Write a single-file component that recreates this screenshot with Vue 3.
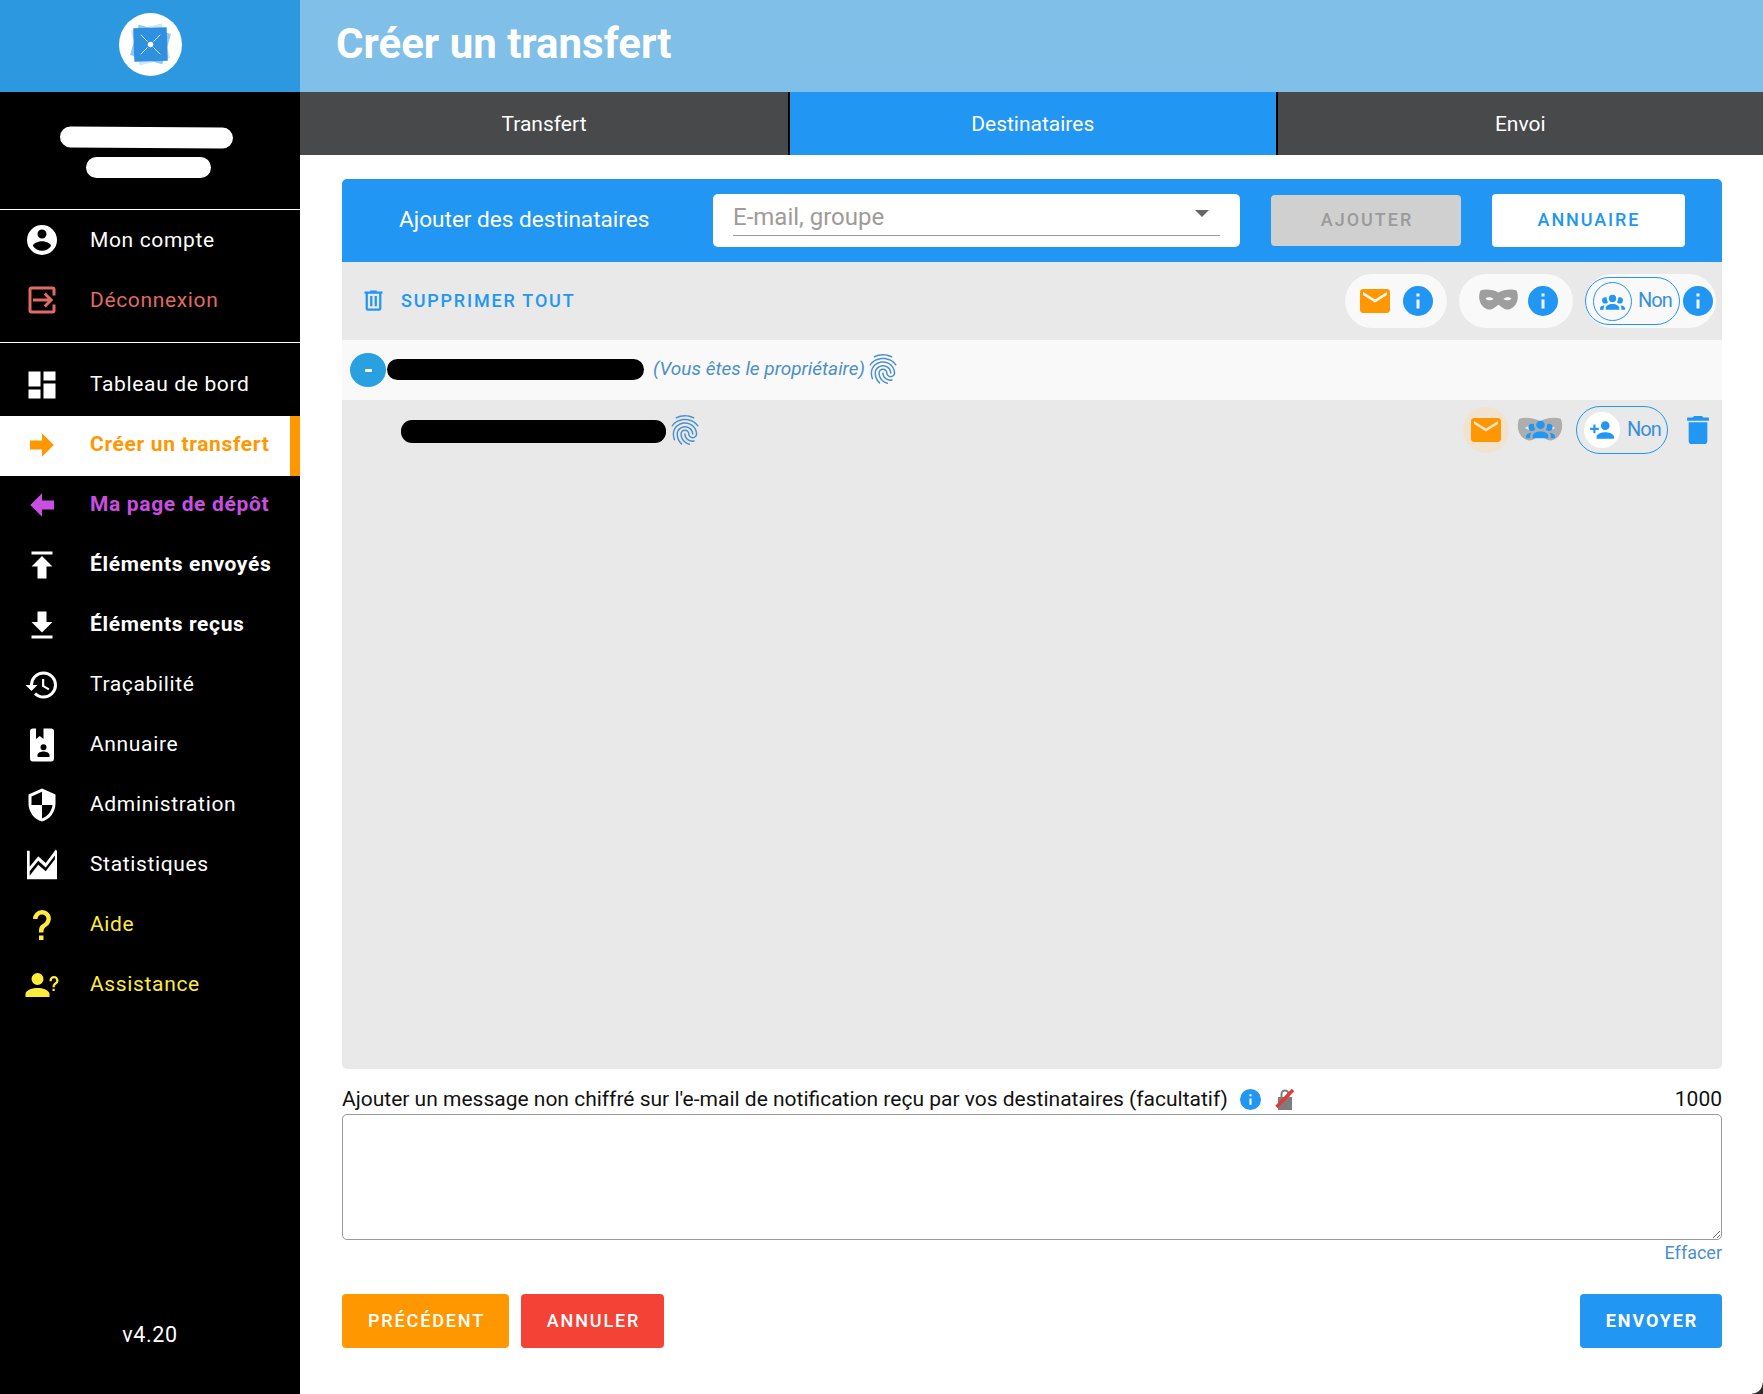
<script setup>
const icons = {
  account: 'M12,19.2C9.5,19.2 7.29,17.92 6,16C6.03,14 10,12.9 12,12.9C14,12.9 17.97,14 18,16C16.71,17.92 14.5,19.2 12,19.2M12,5A3,3 0 0,1 15,8A3,3 0 0,1 12,11A3,3 0 0,1 9,8A3,3 0 0,1 12,5M12,2A10,10 0 0,0 2,12A10,10 0 0,0 12,22A10,10 0 0,0 22,12A10,10 0 0,0 12,2Z',
  logout: 'M5,3H19A2,2 0 0,1 21,5V9H19V5H5V19H19V15H21V19A2,2 0 0,1 19,21H5A2,2 0 0,1 3,19V5A2,2 0 0,1 5,3M14.5,7L13.1,8.4L15.7,11H6V13H15.7L13.1,15.6L14.5,17L19.5,12L14.5,7Z',
  dashboard: 'M13,3V9H21V3M13,21H21V11H13M3,21H11V15H3M3,13H11V3H3V13Z',
  right: 'M4,15V9H12V4.16L19.84,12L12,19.84V15H4Z',
  left: 'M20,9V15H12V19.84L4.16,12L12,4.16V9H20Z',
  upload: 'M5,3V5H19V3H5M5,13H9V21H15V13H19L12,6L5,13Z',
  download: 'M5,21H19V19H5M19,10H15V3H9V10H5L12,17L19,10Z',
  history: 'M13.5,8H12V13L16.28,15.54L17,14.33L13.5,12.25V8M13,3A9,9 0 0,0 4,12H1L4.96,16.03L9,12H6A7,7 0 0,1 13,5A7,7 0 0,1 20,12A7,7 0 0,1 13,19C11.07,19 9.32,18.21 8.06,16.94L6.64,18.36C8.27,20 10.5,21 13,21A9,9 0 0,0 22,12A9,9 0 0,0 13,3',
  book: 'M6,1H8V8L10.5,6L13,8V1H18A2,2 0 0,1 20,3V21A2,2 0 0,1 18,23H6A2,2 0 0,1 4,21V3A2,2 0 0,1 6,1M13,11.5A2,2 0 0,0 11,13.5A2,2 0 0,0 13,15.5A2,2 0 0,0 15,13.5A2,2 0 0,0 13,11.5M9,20H17V18.6C17,17.2 14.3,16.4 13,16.4C11.7,16.4 9,17.2 9,18.6V20Z',
  shield: 'M12 1L3 5v6c0 5.55 3.84 10.74 9 12 5.16-1.26 9-6.45 9-12V5l-9-4zm0 10.99h7c-.53 4.12-3.28 7.79-7 8.94V12H5V6.3l7-3.11v8.8z',
  stats: 'M2,2.5H3.8V13.2L9.5,6.2L14.5,10.6L21.2,1.6L22,2.6V21.5H2V2.5M3.8,19.2L9.5,11.8L14.5,16.2L20.6,8.2V5.6L14.5,13.6L9.5,9.2L3.8,16.2V19.2Z',
  help: 'M10,19H13V22H10V19M12,2C17.35,2.22 19.68,7.62 16.5,11.67C15.67,12.67 14.33,13.33 13.67,14.17C13,15 13,16 13,17H10C10,15.33 10,13.92 10.67,12.92C11.33,11.92 12.67,11.33 13.5,10.67C15.92,8.43 15.32,5.26 12,5A3,3 0 0,0 9,8H6A6,6 0 0,1 12,2Z',
  support: 'M13,8A4,4 0 0,1 9,12A4,4 0 0,1 5,8A4,4 0 0,1 9,4A4,4 0 0,1 13,8M17,18V20H1V18C1,15.79 4.58,14 9,14C13.42,14 17,15.79 17,18M20.5,14.5V16H19V14.5H20.5M18.5,9.5H17V9A3,3 0 0,1 20,6A3,3 0 0,1 23,9C23,9.97 22.5,10.88 21.71,11.41L21.41,11.6C20.84,12 20.5,12.61 20.5,13.3V13.5H19V13.3C19,12.11 19.6,11 20.59,10.35L20.88,10.16C21.27,9.9 21.5,9.47 21.5,9A1.5,1.5 0 0,0 20,7.5A1.5,1.5 0 0,0 18.5,9V9.5Z',
  email: 'M20 4H4c-1.1 0-1.99.9-1.99 2L2 18c0 1.1.9 2 2 2h16c1.1 0 2-.9 2-2V6c0-1.1-.9-2-2-2zm0 4l-8 5-8-5V6l8 5 8-5v2z',
  info: 'M13,9H11V7H13M13,17H11V11H13M12,2A10,10 0 0,0 2,12A10,10 0 0,0 12,22A10,10 0 0,0 22,12A10,10 0 0,0 12,2Z',
  group: 'M12,5.5A3.5,3.5 0 0,1 15.5,9A3.5,3.5 0 0,1 12,12.5A3.5,3.5 0 0,1 8.5,9A3.5,3.5 0 0,1 12,5.5M5,8C5.56,8 6.08,8.15 6.53,8.42C6.38,9.85 6.8,11.27 7.66,12.38C7.16,13.34 6.16,14 5,14A3,3 0 0,1 2,11A3,3 0 0,1 5,8M19,8A3,3 0 0,1 22,11A3,3 0 0,1 19,14C17.84,14 16.84,13.34 16.34,12.38C17.2,11.27 17.62,9.85 17.47,8.42C17.92,8.15 18.44,8 19,8M5.5,18.25C5.5,16.18 8.41,14.5 12,14.5C15.59,14.5 18.5,16.18 18.5,18.25V20H5.5V18.25M0,20V18.5C0,17.11 1.89,15.94 4.45,15.6C3.86,16.28 3.5,17.22 3.5,18.25V20H0M24,20H20.5V18.25C20.5,17.22 20.14,16.28 19.55,15.6C22.11,15.94 24,17.11 24,18.5V20Z',
  plus: 'M15,14C12.33,14 7,15.33 7,18V20H23V18C23,15.33 17.67,14 15,14M6,10V7H4V10H1V12H4V15H6V12H9V10M15,12A4,4 0 0,0 19,8A4,4 0 0,0 15,4A4,4 0 0,0 11,8A4,4 0 0,0 15,12Z',
  trash: 'M19,4H15.5L14.5,3H9.5L8.5,4H5V6H19M6,19A2,2 0 0,0 8,21H16A2,2 0 0,0 18,19V7H6V19Z',
  trashOutline: 'M9,3V4H4V6H5V19A2,2 0 0,0 7,21H17A2,2 0 0,0 19,19V6H20V4H15V3H9M7,6H17V19H7V6M9,8V17H11V8H9M13,8V17H15V8H13Z',
  finger: 'M17.81,4.47C17.73,4.47 17.65,4.45 17.58,4.41C15.66,3.42 14,3 12,3C10.03,3 8.15,3.47 6.44,4.41C6.2,4.54 5.9,4.45 5.76,4.21C5.63,3.97 5.72,3.66 5.96,3.53C7.82,2.5 9.86,2 12,2C14.14,2 16,2.47 18.04,3.5C18.29,3.65 18.38,3.95 18.25,4.19C18.16,4.37 18,4.47 17.81,4.47M3.5,9.72C3.4,9.72 3.3,9.69 3.21,9.63C3,9.47 2.93,9.16 3.09,8.93C4.08,7.53 5.34,6.43 6.84,5.66C10,4.04 14,4.03 17.15,5.65C18.65,6.42 19.91,7.5 20.9,8.9C21.06,9.12 21,9.44 20.78,9.6C20.55,9.76 20.24,9.71 20.08,9.5C19.18,8.22 18.04,7.23 16.69,6.54C13.82,5.07 10.15,5.07 7.29,6.55C5.93,7.25 4.79,8.25 3.89,9.5C3.81,9.65 3.66,9.72 3.5,9.72M9.75,21.79C9.62,21.79 9.5,21.74 9.4,21.64C8.53,20.77 8.06,20.21 7.39,19C6.7,17.77 6.34,16.27 6.34,14.66C6.34,11.69 8.88,9.27 12,9.27C15.12,9.27 17.66,11.69 17.66,14.66A0.5,0.5 0 0,1 17.16,15.16A0.5,0.5 0 0,1 16.66,14.66C16.66,12.24 14.57,10.27 12,10.27C9.43,10.27 7.34,12.24 7.34,14.66C7.34,16.1 7.66,17.43 8.27,18.5C8.91,19.66 9.35,20.15 10.12,20.93C10.31,21.13 10.31,21.44 10.12,21.64C10,21.74 9.88,21.79 9.75,21.79M16.92,19.94C15.73,19.94 14.68,19.64 13.82,19.05C12.33,18.04 11.44,16.4 11.44,14.66A0.5,0.5 0 0,1 11.94,14.16A0.5,0.5 0 0,1 12.44,14.66C12.44,16.07 13.16,17.4 14.38,18.22C15.09,18.7 15.92,18.93 16.92,18.93C17.16,18.93 17.56,18.9 17.96,18.83C18.23,18.78 18.5,18.96 18.54,19.24C18.59,19.5 18.41,19.77 18.13,19.82C17.56,19.93 17.06,19.94 16.92,19.94M14.91,22C14.87,22 14.82,22 14.78,22C13.19,21.54 12.15,20.95 11.06,19.88C9.66,18.5 8.89,16.64 8.89,14.66C8.89,13.04 10.27,11.72 11.97,11.72C13.67,11.72 15.05,13.04 15.05,14.66C15.05,15.73 16,16.6 17.13,16.6C18.28,16.6 19.21,15.73 19.21,14.66C19.21,10.89 15.96,7.83 11.96,7.83C9.12,7.83 6.5,9.41 5.35,11.86C4.96,12.67 4.76,13.62 4.76,14.66C4.76,15.44 4.83,16.67 5.43,18.27C5.53,18.53 5.4,18.82 5.14,18.91C4.88,19 4.59,18.87 4.5,18.62C4,17.31 3.77,16 3.77,14.66C3.77,13.46 4,12.37 4.45,11.42C5.78,8.63 8.73,6.82 11.96,6.82C16.5,6.82 20.21,10.33 20.21,14.65C20.21,16.27 18.83,17.59 17.13,17.59C15.43,17.59 14.05,16.27 14.05,14.65C14.05,13.58 13.12,12.71 11.97,12.71C10.82,12.71 9.89,13.58 9.89,14.65C9.89,16.36 10.55,17.96 11.76,19.16C12.71,20.1 13.62,20.62 15.03,21C15.3,21.08 15.45,21.36 15.38,21.62C15.33,21.85 15.12,22 14.91,22Z'
}
const mask = 'M2,1.5C8,-0.5 15.5,1.2 20,3.6C24.5,1.2 32,-0.5 38,1.5C41,8 39,18 30.5,20.4C25.5,21.5 22.5,16.6 20,16C17.5,16.6 14.5,21.5 9.5,20.4C1,18 -1,8 2,1.5ZM7,9.5C9,12 13,11.8 15,10C13,7.6 9,7.6 7,9.5ZM33,9.5C31,7.6 27,7.6 25,10C27,11.8 31,12 33,9.5Z'

const topNav = [
  { label: 'Mon compte', icon: 'account', cls: '' },
  { label: 'Déconnexion', icon: 'logout', cls: 'red' }
]
const nav = [
  { label: 'Tableau de bord', icon: 'dashboard', cls: '' },
  { label: 'Créer un transfert', icon: 'right', cls: 'active strong' },
  { label: 'Ma page de dépôt', icon: 'left', cls: 'purple strong' },
  { label: 'Éléments envoyés', icon: 'upload', cls: 'strong' },
  { label: 'Éléments reçus', icon: 'download', cls: 'strong' },
  { label: 'Traçabilité', icon: 'history', cls: '' },
  { label: 'Annuaire', icon: 'book', cls: '' },
  { label: 'Administration', icon: 'shield', cls: '' },
  { label: 'Statistiques', icon: 'stats', cls: '' },
  { label: 'Aide', icon: 'help', cls: 'yellow' },
  { label: 'Assistance', icon: 'support', cls: 'yellow' }
]
const tabs = [
  { label: 'Transfert', active: false },
  { label: 'Destinataires', active: true },
  { label: 'Envoi', active: false }
]
</script>

<template>
  <div class="app">
    <aside class="sidebar">
      <div class="logo-bar">
        <div class="logo">
          <svg viewBox="0 0 64 64" class="logo-svg">
            <rect x="16" y="14" width="32" height="36" fill="#cfe6f8" transform="rotate(-14 32 32)" />
            <rect x="15" y="16" width="34" height="32" fill="#8ec6ef" transform="rotate(16 32 32)" />
            <rect x="15" y="15" width="34" height="34" fill="#2f90e0" transform="rotate(-2 32 32)" />
            <path d="M22 22L29 29M42 22L35 29M22 42L29 35M42 42L35 35" stroke="#d6ebfa" stroke-width="1" />
            <circle cx="32" cy="32" r="2.8" fill="#fff" />
          </svg>
        </div>
      </div>
      <div class="user">
        <div class="pill-a"></div>
        <div class="pill-b"></div>
      </div>
      <div class="nav-top">
        <div v-for="item in topNav" :key="item.label" class="nav-row" :class="item.cls">
          <svg class="nav-icon" viewBox="0 0 24 24"><path :d="icons[item.icon]" fill="currentColor" fill-rule="evenodd" /></svg>
          <span>{{ item.label }}</span>
        </div>
      </div>
      <div class="nav-main">
        <div v-for="item in nav" :key="item.label" class="nav-row" :class="item.cls">
          <svg class="nav-icon" viewBox="0 0 24 24"><path :d="icons[item.icon]" fill="currentColor" fill-rule="evenodd" /></svg>
          <span>{{ item.label }}</span>
        </div>
      </div>
      <div class="version">v4.20</div>
    </aside>

    <main class="main">
      <header class="title-bar"><h1>Créer un transfert</h1></header>
      <nav class="tabs">
        <div v-for="t in tabs" :key="t.label" class="tab" :class="{ on: t.active }">{{ t.label }}</div>
      </nav>

      <section class="content">
        <div class="add-bar">
          <div class="add-label">Ajouter des destinataires</div>
          <div class="combo">
            <div class="combo-inner">
              <span class="placeholder">E-mail, groupe</span>
              <span class="caret"></span>
            </div>
          </div>
          <button class="btn-add">AJOUTER</button>
          <button class="btn-book">ANNUAIRE</button>
        </div>

        <div class="panel">
          <div class="toolbar">
            <div class="del-all">
              <svg class="ic-del" viewBox="0 0 24 24"><path :d="icons.trashOutline" fill="#2196f3" /></svg>
              <span>SUPPRIMER TOUT</span>
            </div>
            <div class="chips">
              <div class="chip chip-mail">
                <svg class="ic-mail" viewBox="2 4 20 16"><path :d="icons.email" fill="#ff9800" /></svg>
                <svg class="ic-info" viewBox="2 2 20 20"><path :d="icons.info" fill="#2196f3" fill-rule="evenodd" /></svg>
              </div>
              <div class="chip chip-mask">
                <svg class="ic-mask" viewBox="0 0 40 21"><path :d="mask" fill="#9e9e9e" fill-rule="evenodd" /></svg>
                <svg class="ic-info" viewBox="2 2 20 20"><path :d="icons.info" fill="#2196f3" fill-rule="evenodd" /></svg>
              </div>
              <div class="chip chip-non">
                <div class="non-pill">
                  <span class="ring"><svg viewBox="0 0 24 24"><path :d="icons.group" fill="#2196f3" /></svg></span>
                  <span class="non">Non</span>
                </div>
                <svg class="ic-info" viewBox="2 2 20 20"><path :d="icons.info" fill="#2196f3" fill-rule="evenodd" /></svg>
              </div>
            </div>
          </div>

          <div class="owner">
            <span class="minus"><i></i></span>
            <span class="redact r-owner"></span>
            <em class="owner-note">(Vous êtes le propriétaire)</em>
            <svg class="ic-finger" viewBox="0 0 24 24"><path :d="icons.finger" fill="#4a90d0" /></svg>
          </div>

          <div class="recipient">
            <span class="redact r-rec"></span>
            <svg class="ic-finger f2" viewBox="0 0 24 24"><path :d="icons.finger" fill="#4a90d0" /></svg>
            <div class="rec-actions">
              <div class="halo">
                <svg class="ic-mail" viewBox="2 4 20 16"><path :d="icons.email" fill="#ff9800" /></svg>
              </div>
              <span class="mask-group">
                <svg class="mg-mask" viewBox="0 0 40 21" preserveAspectRatio="none"><path :d="mask" fill="#adadad" fill-rule="evenodd" /></svg>
                <svg class="mg-group" viewBox="0 0 24 24"><path :d="icons.group" fill="#2196f3" /></svg>
              </span>
              <div class="non-pill small">
                <span class="ring solid"><svg viewBox="0 0 24 24"><path :d="icons.plus" fill="#2196f3" /></svg></span>
                <span class="non">Non</span>
              </div>
              <svg class="ic-trash" viewBox="5 3 14 18"><path :d="icons.trash" fill="#2196f3" /></svg>
            </div>
          </div>
        </div>

        <div class="msg-head">
          <span class="msg-label">Ajouter un message non chiffré sur l'e-mail de notification reçu par vos destinataires (facultatif)</span>
          <svg class="ic-mini" viewBox="2 2 20 20"><path :d="icons.info" fill="#2196f3" fill-rule="evenodd" /></svg>
          <svg class="ic-lock" viewBox="0 0 20 24">
            <path d="M3 10H5.5V7a4.5 4.5 0 0 1 9 0V10H17V23H3ZM7.5 10H12.5V7a2.5 2.5 0 0 0-5 0Z" fill="#7d7d7d" fill-rule="evenodd" />
            <path d="M1.5 20L18 3" stroke="#e53935" stroke-width="3.4" />
          </svg>
          <span class="count">1000</span>
        </div>
        <textarea class="msg"></textarea>
        <div class="clear"><span>Effacer</span></div>

        <div class="actions">
          <button class="act orange">PRÉCÉDENT</button>
          <button class="act red-b">ANNULER</button>
          <button class="act blue">ENVOYER</button>
        </div>
      </section>
    </main>
    <div class="corner"></div>
  </div>
</template>

<style>
html, body { margin: 0; background: #fff; }
</style>

<style scoped>
.app { position: relative; display: flex; width: 1763px; height: 1394px; overflow: hidden; font-family: Roboto, "Liberation Sans", sans-serif; color: #111; }
.sidebar { width: 300px; flex: none; background: #000; color: #fff; display: flex; flex-direction: column; }
.logo-bar { height: 92px; background: #2b98e0; display: flex; align-items: center; justify-content: center; }
.logo { width: 63px; height: 63px; border-radius: 50%; background: #fff; margin-top: -3px; }
.logo-svg { display: block; width: 63px; height: 63px; }
.user { height: 118px; box-sizing: border-box; border-bottom: 1px solid #fff; display: flex; flex-direction: column; align-items: center; padding-top: 35px; gap: 9px; }
.pill-a { width: 173px; height: 21px; background: #fff; border-radius: 11px; transform: rotate(.4deg); margin-left: -7px; }
.pill-b { width: 125px; height: 21px; background: #fff; border-radius: 11px; margin-left: -3px; }
.nav-top { height: 133px; box-sizing: border-box; border-bottom: 1px solid #fff; }
.nav-main { padding-top: 13px; }
.nav-row { height: 60px; box-sizing: border-box; display: flex; align-items: center; padding-left: 24px; gap: 30px; font-size: 21px; letter-spacing: .65px; color: #fff; }
.nav-icon { width: 36px; height: 36px; flex: none; }
.nav-main .nav-icon { margin-bottom: 2px; }
.nav-main .nav-row span { margin-bottom: 4px; }
.nav-row.red { color: #e06a64; }
.nav-row.strong { font-weight: 700; }
.nav-row.purple { color: #c94fe0; }
.nav-row.yellow { color: #ffeb3b; }
.nav-row.active { background: #fff; color: #ff9800; border-right: 10px solid #ff9800; }
.version { margin-top: auto; padding-bottom: 47px; text-align: center; font-size: 21.5px; letter-spacing: .6px; }

.main { flex: 1; min-width: 0; display: flex; flex-direction: column; }
.title-bar { height: 92px; background: #7fbfe8; display: flex; align-items: center; padding-left: 36px; }
.title-bar h1 { margin: 0 0 6px; font-size: 42px; font-weight: 700; color: #fff; }
.tabs { display: grid; grid-template-columns: 488px 489.5px 1fr; height: 63px; background: #48494b; }
.tab { box-sizing: border-box; display: flex; align-items: center; justify-content: center; color: #fff; font-size: 21px; }
.tab.on { background: #2196f3; border-left: 2px solid #000; border-right: 2px solid #000; }

.content { padding: 24px 41px 0 42px; display: flex; flex-direction: column; flex: 1; }
.add-bar { height: 83px; background: #2196f3; border-radius: 5px 5px 0 0; display: flex; align-items: center; padding-left: 57px; box-sizing: border-box; }
.add-label { width: 314px; flex: none; color: #fff; font-size: 22.6px; margin-bottom: 2px; }
.combo { width: 527px; height: 53px; flex: none; background: #fff; border-radius: 5px; box-sizing: border-box; padding: 0 20px; }
.combo-inner { height: 41px; border-bottom: 1px solid #9a9a9a; display: flex; align-items: center; justify-content: space-between; }
.placeholder { font-size: 24px; color: #a09a98; margin-top: 4px; }
.caret { border-left: 7px solid transparent; border-right: 7px solid transparent; border-top: 7px solid #666; margin-right: 11px; margin-top: -2px; }
.btn-add, .btn-book, .act { border: 0; font-family: inherit; font-weight: 500; font-size: 18px; letter-spacing: 2px; border-radius: 4px; padding: 0 0 2px; }
.btn-add { width: 190px; height: 51px; margin-left: 31px; background: #d0d0d0; color: #9a9a9a; padding-left: 2px; }
.btn-book { width: 193px; height: 53px; margin-left: 31px; background: #fff; color: #2196f3; padding-left: 1px; letter-spacing: 1.9px; }

.panel { flex: none; height: 807px; background: #e9e9e9; border-radius: 0 0 5px 5px; display: flex; flex-direction: column; }
.toolbar { height: 78px; flex: none; display: flex; align-items: center; justify-content: space-between; padding: 0 6px 0 18px; box-sizing: border-box; }
.del-all { display: flex; align-items: center; gap: 14px; color: #2196f3; font-size: 18px; font-weight: 500; letter-spacing: 1.8px; padding-bottom: 2px; }
.ic-del { width: 27px; height: 27px; }
.chips { display: flex; gap: 12px; }
.chip { height: 54px; background: #f9f9f9; border-radius: 27px; display: flex; align-items: center; box-sizing: border-box; }
.chip-mail { width: 102px; padding-left: 15px; gap: 13px; }
.chip-mask { width: 114px; padding-left: 19px; gap: 9px; }
.chip-non { width: 131px; }
.ic-mail { width: 30px; height: 24px; display: block; }
.ic-info { width: 30px; height: 30px; flex: none; }
.ic-mask { width: 41px; height: 21px; margin-top: -3px; }
.non-pill { width: 95px; height: 48px; flex: none; box-sizing: border-box; border: 1px solid #2196f3; border-radius: 24px; display: flex; align-items: center; padding-left: 7px; gap: 6px; margin-right: 3px; }
.ring { width: 39px; height: 39px; box-sizing: border-box; flex: none; border: 1px solid #2196f3; border-radius: 50%; display: flex; align-items: center; justify-content: center; }
.ring svg { width: 25px; height: 25px; }
.non { color: #3a8fdc; font-size: 20px; letter-spacing: -.9px; margin-top: -2px; }

.owner { height: 60px; flex: none; background: #f9f9f9; display: flex; align-items: center; padding-left: 8px; box-sizing: border-box; }
.minus { width: 36px; height: 34px; flex: none; border-radius: 50%; background: #29a0e0; display: flex; align-items: center; justify-content: center; }
.minus i { width: 7px; height: 3px; background: #fff; border-radius: 1px; }
.redact { display: block; height: 21px; background: #000; border-radius: 11px; flex: none; }
.r-owner { width: 257px; margin-left: 1px; margin-top: -2px; }
.owner-note { margin-left: 9px; font-size: 19px; color: #4a90c8; font-style: italic; margin-top: -4px; }
.ic-finger { width: 36px; height: 36px; margin-left: 0; flex: none; margin-top: -2px; }
.recipient { height: 60px; flex: none; display: flex; align-items: center; padding-left: 59px; padding-right: 13px; box-sizing: border-box; }
.r-rec { width: 265px; height: 23px; margin-top: 3px; }
.f2 { margin-left: 1px; margin-top: 0; }
.rec-actions { margin-left: auto; display: flex; align-items: center; }
.halo { width: 46px; height: 46px; border-radius: 50%; background: #f1e3cf; display: flex; align-items: center; justify-content: center; }
.mask-group { position: relative; width: 46px; height: 24px; margin-left: 8px; margin-top: -3px; }
.mg-mask { display: block; width: 46px; height: 24px; }
.mg-group { position: absolute; left: 9px; top: -3px; width: 29px; height: 29px; }
.non-pill.small { width: 92px; margin: 0 0 0 13px; padding-left: 7px; gap: 7px; }
.ring.solid { width: 36px; height: 36px; border: 0; background: #fff; }
.ring.solid svg { width: 26px; height: 26px; }
.ic-trash { width: 22px; height: 28px; margin-left: 19px; }

.msg-head { display: flex; align-items: center; height: 30px; margin-top: 15px; font-size: 21px; color: #111; }
.msg-label { white-space: nowrap; }
.ic-mini { width: 21px; height: 21px; margin-left: 12px; }
.ic-lock { width: 20px; height: 24px; margin-left: 14px; }
.count { margin-left: auto; }
.msg { display: block; box-sizing: border-box; width: 100%; height: 126px; border: 1px solid #999; border-radius: 5px; background: #fff; margin: 0; outline: 0; }
.clear { text-align: right; color: #4a90d0; font-size: 18px; height: 54px; padding-top: 2px; box-sizing: border-box; }
.actions { display: flex; gap: 12px; }
.act { height: 54px; color: #fff; letter-spacing: 1.85px; padding-left: 2px; }
.orange { width: 167px; background: #ff9800; }
.red-b { width: 143px; background: #f44336; }
.blue { width: 142px; background: #2196f3; margin-left: auto; font-weight: 700; }
.corner { position: absolute; right: 0; bottom: 0; width: 11px; height: 11px; background: radial-gradient(circle at 0 0, transparent 10px, #2a2a2a 11px); }
</style>
